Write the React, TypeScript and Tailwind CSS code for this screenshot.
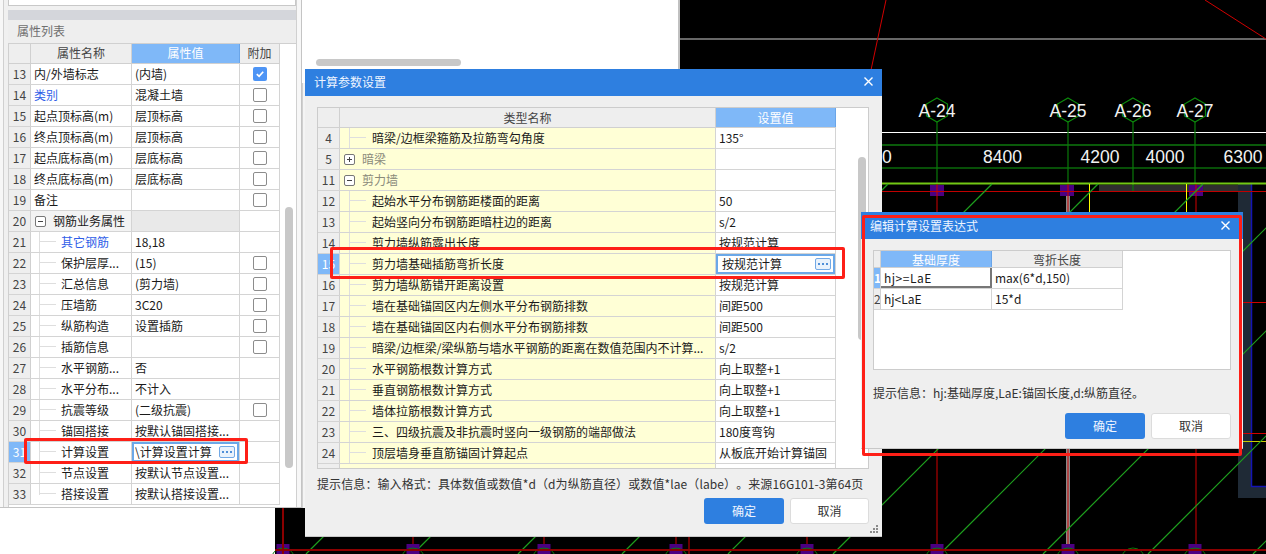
import React from "react";

const CJK = "font-['Noto_Sans_CJK_SC','Noto_Sans',sans-serif]";

type PropRow = {
  n: number;
  name: string;
  value?: string;
  check?: boolean;
  checked?: boolean;
  blue?: boolean;
  group?: boolean;
  child?: boolean;
  last?: boolean;
  editing?: boolean;
};

const propRows: PropRow[] = [
  { n: 13, name: "内/外墙标志", value: "(内墙)", check: true, checked: true },
  { n: 14, name: "类别", value: "混凝土墙", check: true, blue: true },
  { n: 15, name: "起点顶标高(m)", value: "层顶标高", check: true },
  { n: 16, name: "终点顶标高(m)", value: "层顶标高", check: true },
  { n: 17, name: "起点底标高(m)", value: "层底标高", check: true },
  { n: 18, name: "终点底标高(m)", value: "层底标高", check: true },
  { n: 19, name: "备注", check: true },
  { n: 20, name: "钢筋业务属性", group: true },
  { n: 21, name: "其它钢筋", value: "18,18", child: true, blue: true },
  { n: 22, name: "保护层厚...", value: "(15)", child: true, check: true },
  { n: 23, name: "汇总信息", value: "(剪力墙)", child: true, check: true },
  { n: 24, name: "压墙筋", value: "3C20", child: true, check: true },
  { n: 25, name: "纵筋构造", value: "设置插筋", child: true, check: true },
  { n: 26, name: "插筋信息", child: true, check: true },
  { n: 27, name: "水平钢筋...", value: "否", child: true },
  { n: 28, name: "水平分布...", value: "不计入", child: true },
  { n: 29, name: "抗震等级", value: "(二级抗震)", child: true, check: true },
  { n: 30, name: "锚固搭接", value: "按默认锚固搭接...", child: true },
  { n: 31, name: "计算设置", value: "\\计算设置计算", child: true, editing: true },
  { n: 32, name: "节点设置", value: "按默认节点设置...", child: true },
  { n: 33, name: "搭接设置", value: "按默认搭接设置...", child: true, last: true },
];

type ParamRow = {
  n: number;
  name: string;
  value?: string;
  fold?: "plus" | "minus";
  editing?: boolean;
};

const paramRows: ParamRow[] = [
  { n: 4, name: "暗梁/边框梁箍筋及拉筋弯勾角度", value: "135°" },
  { n: 5, name: "暗梁", fold: "plus" },
  { n: 11, name: "剪力墙", fold: "minus" },
  { n: 12, name: "起始水平分布钢筋距楼面的距离", value: "50" },
  { n: 13, name: "起始竖向分布钢筋距暗柱边的距离", value: "s/2" },
  { n: 14, name: "剪力墙纵筋露出长度", value: "按规范计算" },
  { n: 15, name: "剪力墙基础插筋弯折长度", value: "按规范计算", editing: true },
  { n: 16, name: "剪力墙纵筋错开距离设置", value: "按规范计算" },
  { n: 17, name: "墙在基础锚固区内左侧水平分布钢筋排数", value: "间距500" },
  { n: 18, name: "墙在基础锚固区内右侧水平分布钢筋排数", value: "间距500" },
  { n: 19, name: "暗梁/边框梁/梁纵筋与墙水平钢筋的距离在数值范围内不计算...", value: "s/2" },
  { n: 20, name: "水平钢筋根数计算方式", value: "向上取整+1" },
  { n: 21, name: "垂直钢筋根数计算方式", value: "向上取整+1" },
  { n: 22, name: "墙体拉筋根数计算方式", value: "向上取整+1" },
  { n: 23, name: "三、四级抗震及非抗震时竖向一级钢筋的端部做法", value: "180度弯钩" },
  { n: 24, name: "顶层墙身垂直筋锚固计算起点", value: "从板底开始计算锚固" },
];

// Grid-line diagonals of the drawing, as x + y = constant, from the axis band down
const diagonals = [860, 967, 1072, 1176, 1282, 1387, 1494, 1597, 1702, 1807];
const bottomColumns = [283, 413, 544, 676, 807, 937, 1068, 1195];

function CadDrawing() {
  return (
    <svg className="absolute left-0 top-0" width={1266} height={554} viewBox="0 0 1266 554">
      <rect x={680} y={0} width={586} height={554} fill="#000" />
      <rect x={275} y={507} width={405} height={47} fill="#000" />

      <line x1={680} y1={39} x2={1266} y2={39} stroke="#8a8a8a" strokeWidth={1.5} />
      <line x1={886} y1={0} x2={871} y2={70} stroke="#d00000" />
      <line x1={1205} y1={0} x2={1266} y2={39} stroke="#d00000" />

      <rect x={1099} y={185} width={140} height={6} fill="#2f2f2f" />
      <rect x={1238} y={184} width={13} height={265} fill="#1f2a36" />
      <rect x={1238} y={440} width={28} height={58} fill="#1f2a36" />
      <rect x={1252} y={440} width={14} height={47} fill="#000" />
      <polyline points="1251.5,184 1251.5,486.5 1266,486.5" fill="none" stroke="#1414b4" strokeWidth={1.5} />

      <line x1={882} y1={132.5} x2={1266} y2={132.5} stroke="#fff" />
      <line x1={882} y1={145} x2={1266} y2={145} stroke="#0a5a0a" strokeWidth={2} />
      <line x1={882} y1={168} x2={1266} y2={168} stroke="#0a6a0a" strokeWidth={1.5} />

      {[
        [937, 122, 184],
        [1068, 122, 184],
        [1133, 122, 191],
        [1195, 122, 184],
      ].map(([x, a, b]) => (
        <line key={x} x1={x} y1={a} x2={x} y2={b} stroke="#0a7a0a" strokeWidth={1.2} />
      ))}

      {[
        ["A-24", 937],
        ["A-25", 1068],
        ["A-26", 1133],
        ["A-27", 1195],
      ].map(([label, x]) => {
        const cx = x as number;
        return (
          <g key={label as string}>
            <polygon
              points={`${cx},98 ${cx + 10.5},104 ${cx + 10.5},116 ${cx},122 ${cx - 10.5},116 ${cx - 10.5},104`}
              fill="none"
              stroke="#0c8a0c"
              strokeWidth={1.2}
            />
            <text x={cx} y={117} textAnchor="middle" fill="#f2f2f2" fontSize={17.5} className="font-['Liberation_Sans',sans-serif]">
              {label}
            </text>
          </g>
        );
      })}

      {[
        ["8400", 1002.5],
        ["4200", 1100],
        ["4000", 1165],
        ["6300", 1243],
      ].map(([label, x]) => (
        <text key={label as string} x={x as number} y={163} textAnchor="middle" fill="#f2f2f2" fontSize={17.5} className="font-['Liberation_Sans',sans-serif]">
          {label}
        </text>
      ))}
      <text x={882} y={163} fill="#f2f2f2" fontSize={17.5} className="font-['Liberation_Sans',sans-serif]">
        0
      </text>

      {[937, 1067, 1196].map((x) => (
        <rect key={x} x={x - 7} y={185} width={14} height={11} fill="#4b0082" />
      ))}

      <line x1={882} y1={191.5} x2={1266} y2={191.5} stroke="#c00000" />
      <line x1={882} y1={183.5} x2={1266} y2={183.5} stroke="#72c814" strokeWidth={2} />

      <rect x={1066} y={196} width={4} height={358} fill="#8a8a8a" />
      {[937, 1068, 1196, 413, 544, 676, 689, 807].map((x) => (
        <line key={x} x1={x} y1={x > 900 ? 184 : 500} x2={x} y2={554} stroke="#d00000" />
      ))}
      <line x1={1089.5} y1={184} x2={1089.5} y2={440} stroke="#ffff00" />
      <line x1={1186.5} y1={184} x2={1186.5} y2={440} stroke="#ffff00" />
      <line x1={1240} y1={302.5} x2={1266} y2={302.5} stroke="#d00000" />
      <line x1={1240} y1={433.5} x2={1266} y2={433.5} stroke="#d00000" />
      <line x1={1240} y1={441.5} x2={1266} y2={441.5} stroke="#c8c800" />

      {diagonals.map((k) => (
        <line key={k} x1={k - 554} y1={554} x2={k - 184} y2={184} stroke="#1ea01e" strokeWidth={1.2} />
      ))}

      {bottomColumns.map((x) => (
        <g key={x}>
          <rect x={x - 6.5} y={544} width={13} height={10} fill="#4b0082" />
          <circle cx={x} cy={560} r={12} fill="none" stroke="#0a7a0a" />
        </g>
      ))}
      <circle cx={1133} cy={560} r={12} fill="none" stroke="#0a7a0a" />
      <line x1={283} y1={507} x2={283} y2={554} stroke="#8b0000" strokeWidth={2} />
      <line x1={275} y1={550} x2={1266} y2={550} stroke="#8b0000" strokeWidth={2} />
    </svg>
  );
}

function Checkbox({ checked }: { checked?: boolean }) {
  if (checked) {
    return (
      <span className="flex h-[14px] w-[14px] items-center justify-center rounded-[2px] bg-[#4d94f5]">
        <svg width={10} height={10} viewBox="0 0 10 10">
          <path d="M1.8 5.2 L4.1 7.4 L8.2 2.8" fill="none" stroke="#fff" strokeWidth={1.7} />
        </svg>
      </span>
    );
  }
  return <span className="h-[14px] w-[14px] rounded-[2px] border border-[#8c8c8c] bg-white" />;
}

function FoldBox({ kind }: { kind: "plus" | "minus" }) {
  return (
    <svg width={11} height={11} viewBox="0 0 11 11" className="shrink-0">
      <rect x={0.5} y={0.5} width={10} height={10} rx={1.5} fill="#fff" stroke="#777" />
      <line x1={3} y1={5.5} x2={8} y2={5.5} stroke="#444" />
      {kind === "plus" && <line x1={5.5} y1={3} x2={5.5} y2={8} stroke="#444" />}
    </svg>
  );
}

function TreeGuide({ last, width }: { last?: boolean; width: string }) {
  return (
    <span className={`shrink-0 border-l border-[#dedede] ${width} ${last ? "h-[11px] self-start" : "self-stretch"}`}>
      <span className="block h-[10px] border-b border-[#dedede]" />
    </span>
  );
}

function MoreButton() {
  return (
    <span className="flex h-[12px] w-[16px] shrink-0 items-center justify-center gap-[2px] rounded-[2px] border border-[#72a9e6] bg-[#e9f2fc]">
      <span className="h-[2px] w-[2px] bg-[#4f8fd8]" />
      <span className="h-[2px] w-[2px] bg-[#4f8fd8]" />
      <span className="h-[2px] w-[2px] bg-[#4f8fd8]" />
    </span>
  );
}

function CloseIcon() {
  return (
    <svg width={9} height={9} viewBox="0 0 9 9">
      <path d="M0.5 0.5 L8.5 8.5 M8.5 0.5 L0.5 8.5" stroke="#fff" strokeWidth={1.4} />
    </svg>
  );
}

function RedFrame({ className }: { className: string }) {
  return <div className={`absolute rounded-[2px] border-[3px] border-[#fe1f17] ${className}`} />;
}

function PropertyPanel() {
  return (
    <div className="absolute left-0 top-0 flex h-[508px] w-[302px] border-b border-r border-[#c4c4c4] bg-[#f7f7f7] pl-[3px]">
      <div className="flex w-[294px] flex-col border-l border-r border-[#d0d0d0] bg-[#f0f0f0] pl-[4px]">
        <div className="h-[6px] w-[288px] border border-t-0 border-[#c8c8c8] bg-white" />
        <div className="mt-[4px] h-[10px] w-[288px] bg-[#d4d6db]" />
        <div className="flex h-[23px] w-[288px] items-center bg-[#eeeeee] pb-[2px] pl-[9px] text-[#6e6e6e]">属性列表</div>
        <div className="relative w-[288px] flex-1 overflow-hidden border-l border-t border-[#d0d0d0] bg-white">
          <div className="flex h-[20px] w-[271px] border-b border-[#d0d0d0] bg-[#eeeeee] text-[#444]">
            <div className="w-[22px] border-r border-[#d0d0d0]" />
            <div className="w-[101px] border-r border-[#d0d0d0] text-center leading-[18px]">属性名称</div>
            <div className="w-[108px] border-r border-[#6aa5e8] bg-[#7fb8f8] text-center leading-[18px] text-white">属性值</div>
            <div className="w-[40px] border-r border-[#d0d0d0] text-center leading-[18px]">附加</div>
          </div>
          {propRows.map((r) => (
            <div key={r.n} className="flex h-[21px] w-[271px] border-b border-[#d4d4d4] leading-[20px] text-[#1a1a1a]">
              <div
                className={`w-[22px] border-r border-[#d0d0d0] text-center ${
                  r.editing ? "bg-[#7fb8f8] text-white" : "bg-[#eeeeee] text-[#444]"
                }`}
              >
                {r.n}
              </div>
              <div
                className={`flex w-[101px] items-center overflow-hidden whitespace-nowrap border-r border-[#d4d4d4] ${
                  r.group ? "bg-[#f3f3f3]" : ""
                } ${r.blue ? "text-[#2f5ee8]" : ""}`}
              >
                {r.child && (
                  <>
                    <span className="w-[8px] shrink-0" />
                    <TreeGuide last={r.last} width="w-[17px]" />
                    <span className="w-[5px] shrink-0" />
                  </>
                )}
                {r.group && (
                  <>
                    <span className="w-[4px] shrink-0" />
                    <FoldBox kind="minus" />
                    <span className="w-[7px] shrink-0" />
                  </>
                )}
                {!r.child && !r.group && <span className="w-[3px] shrink-0" />}
                {r.name}
              </div>
              <div className={`w-[108px] overflow-hidden whitespace-nowrap border-r border-[#d4d4d4] ${r.group ? "bg-[#e9e9e9]" : ""}`}>
                {r.editing ? (
                  <div className="flex h-[20px] items-center border-2 border-[#6ba8e8] bg-white pl-[1px] pr-[2px]">
                    <span className="w-[84px] overflow-hidden">{r.value}</span>
                    <MoreButton />
                  </div>
                ) : (
                  <span className="pl-[3px]">{r.value}</span>
                )}
              </div>
              <div className="flex w-[40px] items-center justify-center border-r border-[#d4d4d4]">
                {r.check && <Checkbox checked={r.checked} />}
              </div>
            </div>
          ))}
          <div className="absolute left-[276px] top-[163px] h-[261px] w-[8px] rounded-full bg-[#c8c8c8]" />
        </div>
      </div>
    </div>
  );
}

function ParamDialog() {
  return (
    <div className="absolute left-[305px] top-[69px] flex h-[468px] w-[577px] flex-col border-b border-[#c8c8c8] bg-[#efefef]">
      <div className="flex h-[27px] shrink-0 items-center justify-between bg-[#2e7fe0] pb-[2px] pl-[9px] pr-[9px] text-[#eef5ff]">
        <span>计算参数设置</span>
        <CloseIcon />
      </div>
      <div className="relative ml-[12px] mt-[11px] h-[362px] w-[552px] overflow-hidden border border-[#cccccc] bg-white">
        <div className="flex h-[20px] w-[518px] border-b border-[#d0d0d0] bg-[#eeeeee] text-[#444]">
          <div className="w-[22px] border-r border-[#d0d0d0]" />
          <div className="w-[376px] border-r border-[#d0d0d0] text-center leading-[20px]">类型名称</div>
          <div className="w-[120px] border-r border-[#6aa5e8] bg-[#7fb8f8] text-center leading-[20px] text-white">设置值</div>
        </div>
        {paramRows.map((r) => (
          <div key={r.n} className="flex h-[21px] w-[518px] border-b border-[#d4d4d4] leading-[20px] text-[#1a1a1a]">
            <div
              className={`w-[22px] border-r border-[#d0d0d0] text-center ${
                r.editing ? "bg-[#7fb8f8] text-white" : "bg-[#eeeeee] text-[#444]"
              }`}
            >
              {r.n}
            </div>
            <div className={`flex w-[376px] items-center whitespace-nowrap border-r border-[#d4d4d4] bg-[#ffffd6] ${r.fold ? "text-[#8a8a7a]" : ""}`}>
              {r.fold ? (
                <>
                  <span className="w-[4px] shrink-0" />
                  <FoldBox kind={r.fold} />
                  <span className="w-[7px] shrink-0" />
                </>
              ) : (
                <>
                  <span className="w-[9px] shrink-0" />
                  <TreeGuide width="w-[17px]" />
                  <span className="w-[6px] shrink-0" />
                </>
              )}
              {r.name}
            </div>
            <div className="w-[120px] whitespace-nowrap border-r border-[#d4d4d4]">
              {r.editing ? (
                <div className="flex h-[20px] items-center justify-between border-2 border-[#6ba8e8] bg-white pl-[4px] pr-[2px]">
                  <span>{r.value}</span>
                  <MoreButton />
                </div>
              ) : (
                <span className="pl-[3px]">{r.value}</span>
              )}
            </div>
          </div>
        ))}
        <div className="flex h-[6px] w-[518px]">
          <div className="w-[22px] border-r border-[#d0d0d0] bg-[#eeeeee]" />
          <div className="w-[376px] border-r border-[#d4d4d4] bg-[#ffffd6]" />
          <div className="w-[120px] border-r border-[#d4d4d4]" />
        </div>
        <div className="absolute left-[540px] top-[49px] h-[183px] w-[8px] rounded-full bg-[#c8c8c8]" />
      </div>
      <div className="ml-[12px] mt-[6px] h-[17px] whitespace-nowrap leading-[17px] tracking-[0.1px] text-[#333] [text-spacing-trim:space-all]">
        提示信息：输入格式：具体数值或数值*d（d为纵筋直径）或数值*lae（labe）。来源16G101-3第64页
      </div>
      <div className="mr-[13px] mt-[6px] flex justify-end gap-[6px]">
        <div className="flex h-[26px] w-[80px] items-center justify-center rounded-[3px] bg-[#2e7fe0] text-[#eef5ff]">确定</div>
        <div className="flex h-[26px] w-[79px] items-center justify-center rounded-[3px] border border-[#dcdcdc] bg-white text-[#333]">取消</div>
      </div>
      <svg className="absolute bottom-[2px] right-[3px]" width={9} height={9} viewBox="0 0 9 9">
        <path d="M6 0h2v2H6zM3 3h2v2H3zM6 3h2v2H6zM0 6h2v2H0zM3 6h2v2H3zM6 6h2v2H6z" fill="#8a8a8a" />
      </svg>
    </div>
  );
}

function ExpressionDialog() {
  return (
    <div className="absolute left-[861px] top-[212px] flex h-[237px] w-[382px] flex-col border-b border-[#c8c8c8] bg-[#efefef]">
      <div className="flex h-[27px] shrink-0 items-center justify-between bg-[#2e7fe0] pl-[9px] pr-[13px] text-[#eef5ff]">
        <span>编辑计算设置表达式</span>
        <CloseIcon />
      </div>
      <div className="ml-[12px] mt-[11px] h-[120px] w-[358px] border border-[#cccccc] bg-white text-[#1a1a1a]">
        <div className="flex h-[17px] w-[249px] border-b border-[#d0d0d0] bg-[#eeeeee]">
          <div className="w-[7px] border-r border-[#d0d0d0]" />
          <div className="w-[111px] border-r border-[#6aa5e8] bg-[#7fb8f8] text-center leading-[17px] text-white">基础厚度</div>
          <div className="w-[131px] border-r border-[#d0d0d0] text-center leading-[17px] text-[#444]">弯折长度</div>
        </div>
        <div className="flex h-[21px] w-[249px] border-b border-[#d4d4d4] leading-[20px]">
          <div className="w-[7px] overflow-hidden border-r border-[#d0d0d0] bg-[#7fb8f8] text-center font-bold text-white">1</div>
          <div className="w-[111px] border-b-2 border-r-2 border-[#777] pl-[3px] tracking-[0.5px]">hj&gt;=LaE</div>
          <div className="w-[131px] border-r border-[#d4d4d4] pl-[3px]">max(6*d,150)</div>
        </div>
        <div className="flex h-[21px] w-[249px] border-b border-[#d4d4d4] leading-[20px]">
          <div className="w-[7px] overflow-hidden border-r border-[#d0d0d0] bg-[#eeeeee] text-center text-[#444]">2</div>
          <div className="w-[111px] border-r border-[#d4d4d4] pl-[3px]">hj&lt;LaE</div>
          <div className="w-[131px] border-r border-[#d4d4d4] pl-[3px]">15*d</div>
        </div>
      </div>
      <div className="ml-[12px] mt-[14px] h-[17px] whitespace-nowrap leading-[17px] text-[#333]">
        提示信息：hj:基础厚度,LaE:锚固长度,d:纵筋直径。
      </div>
      <div className="mr-[12px] mt-[12px] flex justify-end gap-[6px]">
        <div className="flex h-[26px] w-[80px] items-center justify-center rounded-[3px] bg-[#2e7fe0] text-[#eef5ff]">确定</div>
        <div className="flex h-[26px] w-[80px] items-center justify-center rounded-[3px] border border-[#dcdcdc] bg-white text-[#333]">取消</div>
      </div>
    </div>
  );
}

export default function App() {
  return (
    <div className={`relative h-[554px] w-[1266px] overflow-hidden bg-white text-[12px] ${CJK}`}>
      <CadDrawing />
      {/* Empty panel behind the dialogs, with its horizontal scrollbar */}
      <div className="absolute left-[316px] top-[59px] h-[7px] w-[145px] rounded-full bg-[#c8c8c8]" />
      <div className="absolute left-[678px] top-0 h-[70px] w-[2px] bg-[#c0c0c0]" />
      <div className="absolute left-[302px] top-[83px] h-[425px] w-[3px] border-l border-[#d0d0d0] bg-[#f4f4f4]" />
      <PropertyPanel />
      <ParamDialog />
      <ExpressionDialog />
      <RedFrame className="left-[24px] top-[438px] h-[26px] w-[224px]" />
      <RedFrame className="left-[330px] top-[247px] h-[32px] w-[515px]" />
      <RedFrame className="left-[862px] top-[215px] h-[241px] w-[380px]" />
    </div>
  );
}
